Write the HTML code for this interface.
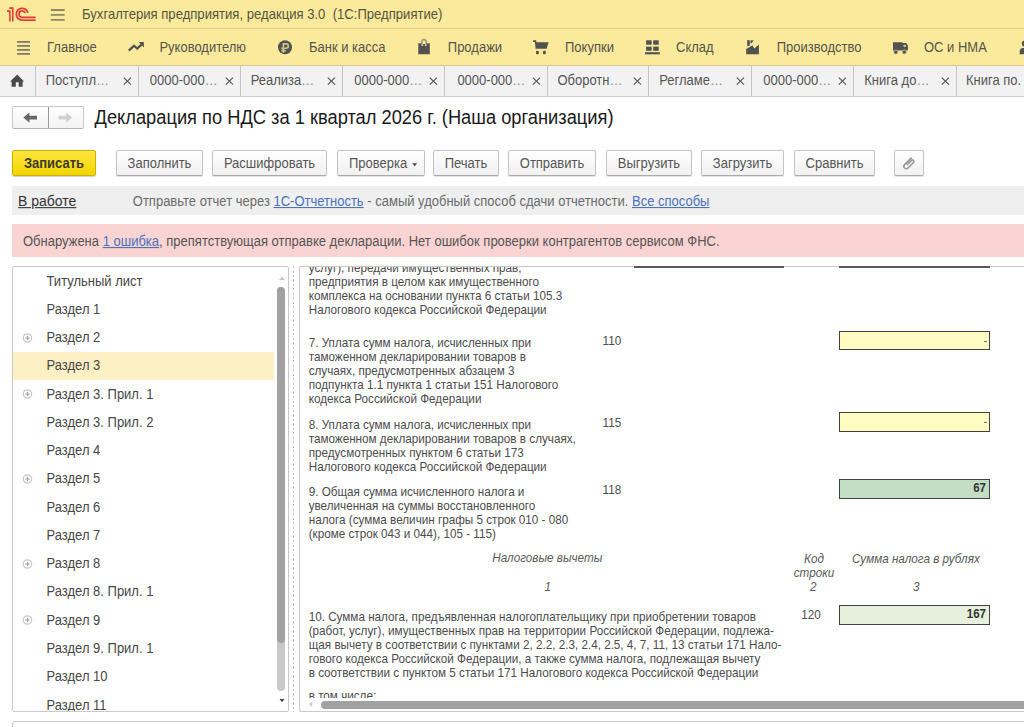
<!DOCTYPE html>
<html><head><meta charset="utf-8">
<style>
*{box-sizing:border-box}
html,body{margin:0;padding:0;width:1024px;height:727px;overflow:hidden;background:#fff;font-family:"Liberation Sans",sans-serif}
.a{position:absolute}
.t{position:absolute;white-space:nowrap;line-height:16px;transform:scaleY(1.1);transform-origin:0 3px}
.btn span{display:inline-block;transform:scaleY(1.1);transform-origin:0 9px}
#title{left:0;top:0;width:1024px;height:29px;background:#FBEA9B;border-bottom:1px solid #DCD08C}
#sect{left:0;top:29px;width:1024px;height:37px;background:#FBEA9B;border-bottom:1px solid #D6CB8A}
#tabs{left:0;top:66px;width:1024px;height:31px;background:#F2F2F2;border-bottom:1px solid #C9C9C9}
.sl{font-size:13px;color:#56544B}
.sep{position:absolute;top:66px;width:1px;height:30px;background:#C4C4C4}
.tabt{font-size:13px;color:#555}
.btn{position:absolute;top:150px;height:26px;border:1px solid #C4C4C4;border-bottom-color:#ABABAB;border-radius:2px;background:linear-gradient(#FFFFFF,#F1F1F1);box-shadow:0 1px 0 rgba(0,0,0,.10);font-size:13px;color:#555;text-align:center;line-height:24px;white-space:nowrap}
.tr{font-size:13px;color:#474747}
.doc{position:absolute;white-space:nowrap;font-size:11.7px;color:#4C4C4C;line-height:14px;transform:scaleY(1.1);transform-origin:0 2.6px}
.it{font-style:italic;color:#595959}
.fld{position:absolute;left:839px;width:151px;border:1px solid #404040}
.plus{position:absolute;width:9px;height:9px;border:1px solid #B5B5B5;border-radius:50%}
.plus:before{content:"";position:absolute;left:1.5px;top:3.5px;width:4px;height:1px;background:#A0A0A0}
.plus:after{content:"";position:absolute;left:3.5px;top:1.5px;width:1px;height:4px;background:#A0A0A0}
</style></head><body>

<div id="title" class="a"></div>
<svg class="a" style="left:4px;top:4px" width="36" height="22" viewBox="4 4 36 22"><path d="M28.0 12.9 A6 6 0 1 0 22.2 20.2 H35.6 V17.2 H22.2 A3.1 3.1 0 1 1 25.1 13.0 Z" fill="#EFA47E" opacity="0.75"/><g fill="none" stroke="#E13A33" stroke-width="1.55"><path d="M7 11.1 H9.9 V21.4"/><path d="M9.3 8.1 H12.8 V21.4"/><path d="M28.0 12.9 A6 6 0 1 0 22.2 20.2 H35.6"/><path d="M25.1 13.0 A3.1 3.1 0 1 0 22.2 17.2 H35.6"/></g></svg>
<svg class="a" style="left:48px;top:6px" width="20" height="18" viewBox="48 6 20 18"><g stroke="#8E8963" stroke-width="1.8"><path d="M50.8 10H64.7M50.8 14.8H64.7M50.8 19.8H64.7"/></g></svg>
<div class="t" style="left:82px;top:6px;font-size:13.1px;color:#57543F">Бухгалтерия предприятия, редакция 3.0&nbsp; (1С:Предприятие)</div>
<div id="sect" class="a"></div>
<svg class="a" style="left:14px;top:38px" width="20" height="20" viewBox="14 38 20 20"><g stroke="#7D7A62" stroke-width="1.8"><path d="M17.1 41.9H30M17.1 45.8H30M17.1 49.8H30M17.1 53.9H30"/></g></svg>
<svg class="a" style="left:124px;top:38px" width="24" height="16" viewBox="124 38 24 16"><path d="M128.8 50.6 L134 45.7 L137.2 48.5 L141.5 44.6" fill="none" stroke="#525250" stroke-width="2.3"/><path d="M138.8 42 H143.8 V47.4 Z" fill="#525250"/></svg>
<svg class="a" style="left:276px;top:38px" width="18" height="18" viewBox="276 38 18 18"><circle cx="285" cy="47.3" r="7" fill="#525250"/><path d="M283.4 52.8 V43.9 H286.1 A2.2 2.2 0 0 1 286.1 48.3 H281.3 M281.3 50.6 H285.8" fill="none" stroke="#CFC68C" stroke-width="1.6"/></svg>
<svg class="a" style="left:416px;top:37px" width="16" height="19" viewBox="416 37 16 19"><path d="M421.8 45.6 V41.7 A2.2 2.2 0 0 1 426.2 41.7 V45.6" fill="none" stroke="#9B956F" stroke-width="1.6"/><path d="M418.3 43.2 H420.9 L421.3 46 H423.1 V44.1 H424.9 V46 H426.7 L427.1 43.2 H429.8 V54.2 H418.3 Z" fill="#525250"/></svg>
<svg class="a" style="left:531px;top:39px" width="20" height="17" viewBox="531 39 20 17"><path d="M533.1 41.1 H535.4 L536 44" fill="none" stroke="#525250" stroke-width="1.6"/><path d="M535 42.3 H548.6 L546.6 48.8 H535.6 Z" fill="#525250"/><rect x="536" y="50.8" width="2.8" height="3.4" rx="1" fill="#525250"/><rect x="543" y="50.8" width="2.8" height="3.4" rx="1" fill="#525250"/></svg>
<svg class="a" style="left:643px;top:38px" width="19" height="18" viewBox="643 38 19 18"><g fill="#525250"><rect x="646.1" y="40.3" width="5.6" height="4.4"/><rect x="653.2" y="40.3" width="5.5" height="4.4"/><rect x="646.1" y="46.6" width="5.6" height="4.2"/><rect x="653.2" y="46.6" width="5.5" height="4.2"/><rect x="645" y="52.2" width="14.8" height="2.1"/></g></svg>
<svg class="a" style="left:744px;top:38px" width="17" height="18" viewBox="744 38 17 18"><path d="M746.2 54.3 V48.9 L752.5 45.3 L754.3 48.4 L758.9 44.4 V54.3 Z" fill="#525250"/><path d="M747.1 40.2 H749.8 V45.6 L747.3 46.6 Z" fill="#525250"/><path d="M750.5 40.2 H753.6 L751.6 43.2 H750.5 Z" fill="#525250"/></svg>
<svg class="a" style="left:890px;top:39px" width="20" height="16" viewBox="890 39 20 16"><path d="M893 42.3 H902.5 V43.1 H906.3 L907.9 45.5 V50.5 H893 Z" fill="#525250"/><rect x="903.4" y="44.8" width="2.7" height="2.2" rx="0.8" fill="#CFC68B"/><circle cx="895.8" cy="52" r="2.4" fill="#B5AE7C"/><circle cx="904.3" cy="52" r="2.4" fill="#B5AE7C"/><circle cx="895.8" cy="52" r="1.5" fill="#525250"/><circle cx="904.3" cy="52" r="1.5" fill="#525250"/></svg>
<svg class="a" style="left:1016px;top:38px" width="8" height="18" viewBox="1016 38 8 18"><circle cx="1025" cy="43.5" r="3.2" fill="#525250"/><path d="M1019.7 54.2 V51.5 A3.5 3.5 0 0 1 1023.2 48.1 H1030 V54.2 Z" fill="#525250"/></svg>
<div class="t sl" style="left:47px;top:39px">Главное</div>
<div class="t sl" style="left:159.4px;top:39px">Руководителю</div>
<div class="t sl" style="left:309px;top:39px">Банк и касса</div>
<div class="t sl" style="left:447.8px;top:39px">Продажи</div>
<div class="t sl" style="left:565px;top:39px">Покупки</div>
<div class="t sl" style="left:676px;top:39px">Склад</div>
<div class="t sl" style="left:776.7px;top:39px">Производство</div>
<div class="t sl" style="left:924px;top:39px">ОС и НМА</div>
<div id="tabs" class="a"></div>
<svg class="a" style="left:8px;top:72px" width="18" height="17" viewBox="8 72 18 17"><path d="M17.2 74.6 L24.1 81.6 H22.6 V86.8 H18.7 V82.2 H15.8 V86.8 H11.6 V81.6 H10.1 Z" fill="#4A4A4A"/></svg>
<div class="sep" style="left:35px"></div>
<div class="t tabt" style="left:45.7px;top:72px">Поступл<span style="color:#8C8C8C">…</span></div>
<svg class="a" style="left:122px;top:76px" width="12" height="11" viewBox="122 76 12 11"><path d="M123.8 77.6 L131.0 84.6 M131.0 77.6 L123.8 84.6" stroke="#5A5A5A" stroke-width="1.25"/></svg>
<div class="sep" style="left:138px"></div>
<div class="t tabt" style="left:149.8px;top:72px">0000-000<span style="color:#8C8C8C">…</span></div>
<svg class="a" style="left:224px;top:76px" width="12" height="11" viewBox="224 76 12 11"><path d="M225.8 77.6 L233.0 84.6 M233.0 77.6 L225.8 84.6" stroke="#5A5A5A" stroke-width="1.25"/></svg>
<div class="sep" style="left:240px"></div>
<div class="t tabt" style="left:250.7px;top:72px">Реализа<span style="color:#8C8C8C">…</span></div>
<svg class="a" style="left:326px;top:76px" width="12" height="11" viewBox="326 76 12 11"><path d="M327.8 77.6 L335.0 84.6 M335.0 77.6 L327.8 84.6" stroke="#5A5A5A" stroke-width="1.25"/></svg>
<div class="sep" style="left:342px"></div>
<div class="t tabt" style="left:354.3px;top:72px">0000-000<span style="color:#8C8C8C">…</span></div>
<svg class="a" style="left:428px;top:76px" width="12" height="11" viewBox="428 76 12 11"><path d="M429.8 77.6 L437.0 84.6 M437.0 77.6 L429.8 84.6" stroke="#5A5A5A" stroke-width="1.25"/></svg>
<div class="sep" style="left:444px"></div>
<div class="t tabt" style="left:457.4px;top:72px">0000-000<span style="color:#8C8C8C">…</span></div>
<svg class="a" style="left:530px;top:76px" width="12" height="11" viewBox="530 76 12 11"><path d="M532.8 77.6 L540.0 84.6 M540.0 77.6 L532.8 84.6" stroke="#5A5A5A" stroke-width="1.25"/></svg>
<div class="sep" style="left:547px"></div>
<div class="t tabt" style="left:557.4px;top:72px">Оборотн<span style="color:#8C8C8C">…</span></div>
<svg class="a" style="left:632px;top:76px" width="12" height="11" viewBox="632 76 12 11"><path d="M633.8 77.6 L641.0 84.6 M641.0 77.6 L633.8 84.6" stroke="#5A5A5A" stroke-width="1.25"/></svg>
<div class="sep" style="left:648px"></div>
<div class="t tabt" style="left:659.2px;top:72px">Регламе<span style="color:#8C8C8C">…</span></div>
<svg class="a" style="left:734px;top:76px" width="12" height="11" viewBox="734 76 12 11"><path d="M736.8 77.6 L744.0 84.6 M744.0 77.6 L736.8 84.6" stroke="#5A5A5A" stroke-width="1.25"/></svg>
<div class="sep" style="left:751px"></div>
<div class="t tabt" style="left:763.3px;top:72px">0000-000<span style="color:#8C8C8C">…</span></div>
<svg class="a" style="left:836px;top:76px" width="12" height="11" viewBox="836 76 12 11"><path d="M838.8 77.6 L846.0 84.6 M846.0 77.6 L838.8 84.6" stroke="#5A5A5A" stroke-width="1.25"/></svg>
<div class="sep" style="left:853px"></div>
<div class="t tabt" style="left:864.3px;top:72px">Книга до<span style="color:#8C8C8C">…</span></div>
<svg class="a" style="left:940px;top:76px" width="12" height="11" viewBox="940 76 12 11"><path d="M941.8 77.6 L949.0 84.6 M949.0 77.6 L941.8 84.6" stroke="#5A5A5A" stroke-width="1.25"/></svg>
<div class="sep" style="left:956px"></div>
<div class="t tabt" style="left:966.0px;top:72px">Книга по.</div>
<div class="a" style="left:12px;top:106px;width:72px;height:23px;border:1px solid #C8C8C8;border-bottom-color:#B4B4B4;border-radius:2px;background:linear-gradient(#FFFFFF,#F3F3F3)"></div>
<div class="a" style="left:48px;top:107px;width:1px;height:21px;background:#9A9A9A"></div>
<svg class="a" style="left:20px;top:110px" width="20" height="15" viewBox="20 110 20 15"><path d="M23.4 117.6 L29.4 112.4 V115.8 H37 V119.4 H29.4 V122.8 Z" fill="#676767"/></svg>
<svg class="a" style="left:56px;top:110px" width="20" height="15" viewBox="56 110 20 15"><path d="M72.2 117.6 L66.2 112.4 V115.8 H58.6 V119.4 H66.2 V122.8 Z" fill="#D0D0D0"/></svg>
<div class="t" style="left:94.5px;top:107px;font-size:18.3px;line-height:20px;color:#1A1A1A">Декларация по НДС за 1 квартал 2026 г. (Наша организация)</div>

<div class="a" style="left:12px;top:150px;width:84px;height:26px;border:1px solid #C9B200;border-radius:2px;background:linear-gradient(#FFE63F,#F4D600);box-shadow:0 1px 1px rgba(0,0,0,.18);font-size:13px;font-weight:bold;color:#3D3A2A;text-align:center;line-height:24px"><span style="display:inline-block;transform:scaleY(1.1);transform-origin:0 9px">Записать</span></div>
<div class="btn" style="left:116px;width:87px"><span>Заполнить</span></div>
<div class="btn" style="left:212px;width:115px"><span>Расшифровать</span></div>
<div class="btn" style="left:337px;width:88px;text-align:left;padding-left:11px"><span>Проверка</span></div>
<svg class="a" style="left:411px;top:162px" width="8" height="6" viewBox="411 162 8 6"><path d="M412.2 163.3 H417.2 L414.7 166.2 Z" fill="#4A4A4A"/></svg>
<div class="btn" style="left:433px;width:66px"><span>Печать</span></div>
<div class="btn" style="left:508px;width:88px"><span>Отправить</span></div>
<div class="btn" style="left:606px;width:86px"><span>Выгрузить</span></div>
<div class="btn" style="left:701px;width:83px"><span>Загрузить</span></div>
<div class="btn" style="left:794px;width:81px"><span>Сравнить</span></div>
<div class="btn" style="left:894px;width:30px"></div>
<svg class="a" style="left:901px;top:156px" width="15" height="15" viewBox="0 0 15 15"><path d="M10.6 1.6 L3.6 8.6 A2.4 2.4 0 0 0 7 12 L12.6 6.4 A1.5 1.5 0 0 0 10.5 4.3 L5.9 8.9" fill="none" stroke="#9C9C9C" stroke-width="1.7"/></svg>
<div class="a" style="left:12px;top:186px;width:1012px;height:29px;background:#EFEFEF"></div>
<div class="t" style="left:18px;top:192px;font-size:14px;color:#333;text-decoration:underline">В работе</div>
<div class="t" style="left:132.8px;top:192.5px;font-size:13px;color:#6B6B6B;text-underline-offset:1px">Отправьте отчет через <span style="color:#4B72BA;text-decoration:underline">1С-Отчетность</span> - самый удобный способ сдачи отчетности. <span style="color:#4B72BA;text-decoration:underline">Все способы</span></div>
<div class="a" style="left:12px;top:224px;width:1012px;height:33px;background:#FAD4D3"></div>
<div class="t" style="left:23px;top:232.5px;font-size:13px;color:#555">Обнаружена <span style="color:#4B72BA;text-decoration:underline">1 ошибка</span>, препятствующая отправке декларации. Нет ошибок проверки контрагентов сервисом ФНС.</div>

<div class="a" style="left:12px;top:266px;width:277px;height:446px;border:1px solid #C9C9C9;border-radius:2px;overflow:hidden">
<div class="t tr" style="left:33.5px;top:5.50px">Титульный лист</div>
<div class="t tr" style="left:33.5px;top:33.77px">Раздел 1</div>
<svg class="a" style="left:9px;top:64.64px" width="13" height="12" viewBox="9 64.64 13 12"><circle cx="14.5" cy="70.64" r="4.2" fill="none" stroke="#C8C8C8" stroke-width="1.2"/><path d="M12.2 70.64 H16.8 M14.5 68.34 V72.94" stroke="#A0A0A0" stroke-width="1.2"/></svg>
<div class="t tr" style="left:33.5px;top:62.04px">Раздел 2</div>
<div class="a" style="left:0;top:85.01px;width:261px;height:28.27px;background:#FDF0C4"></div>
<div class="t tr" style="left:33.5px;top:90.31px">Раздел 3</div>
<svg class="a" style="left:9px;top:121.18px" width="13" height="12" viewBox="9 121.18 13 12"><circle cx="14.5" cy="127.18" r="4.2" fill="none" stroke="#C8C8C8" stroke-width="1.2"/><path d="M12.2 127.18 H16.8 M14.5 124.88 V129.48" stroke="#A0A0A0" stroke-width="1.2"/></svg>
<div class="t tr" style="left:33.5px;top:118.58px">Раздел 3. Прил. 1</div>
<div class="t tr" style="left:33.5px;top:146.85px">Раздел 3. Прил. 2</div>
<div class="t tr" style="left:33.5px;top:175.12px">Раздел 4</div>
<svg class="a" style="left:9px;top:205.99px" width="13" height="12" viewBox="9 205.99 13 12"><circle cx="14.5" cy="211.99" r="4.2" fill="none" stroke="#C8C8C8" stroke-width="1.2"/><path d="M12.2 211.99 H16.8 M14.5 209.69 V214.29" stroke="#A0A0A0" stroke-width="1.2"/></svg>
<div class="t tr" style="left:33.5px;top:203.39px">Раздел 5</div>
<div class="t tr" style="left:33.5px;top:231.66px">Раздел 6</div>
<div class="t tr" style="left:33.5px;top:259.93px">Раздел 7</div>
<svg class="a" style="left:9px;top:290.80px" width="13" height="12" viewBox="9 290.80 13 12"><circle cx="14.5" cy="296.80" r="4.2" fill="none" stroke="#C8C8C8" stroke-width="1.2"/><path d="M12.2 296.80 H16.8 M14.5 294.50 V299.10" stroke="#A0A0A0" stroke-width="1.2"/></svg>
<div class="t tr" style="left:33.5px;top:288.20px">Раздел 8</div>
<div class="t tr" style="left:33.5px;top:316.47px">Раздел 8. Прил. 1</div>
<svg class="a" style="left:9px;top:347.34px" width="13" height="12" viewBox="9 347.34 13 12"><circle cx="14.5" cy="353.34" r="4.2" fill="none" stroke="#C8C8C8" stroke-width="1.2"/><path d="M12.2 353.34 H16.8 M14.5 351.04 V355.64" stroke="#A0A0A0" stroke-width="1.2"/></svg>
<div class="t tr" style="left:33.5px;top:344.74px">Раздел 9</div>
<div class="t tr" style="left:33.5px;top:373.01px">Раздел 9. Прил. 1</div>
<div class="t tr" style="left:33.5px;top:401.28px">Раздел 10</div>
<div class="t tr" style="left:33.5px;top:429.55px">Раздел 11</div>
<div class="a" style="left:264px;top:20px;width:8px;height:404px;border-radius:4px;background:#C9C9C9"></div>
<div class="a" style="left:264px;top:20px;width:8px;height:356px;border-radius:4px;background:#A2A2A2"></div>
<svg class="a" style="left:266px;top:9px" width="6" height="4" viewBox="0 0 6 4"><path d="M0 4 H6 L3 0.5 Z" fill="#C8C8C8"/></svg>
<svg class="a" style="left:266px;top:431.5px" width="6" height="4" viewBox="0 0 6 4"><path d="M0.5 0 H5.5 L3 3.3 Z" fill="#444"/></svg>
</div>
<div class="a" style="left:293px;top:266px;width:1px;height:446px;background:repeating-linear-gradient(#C2C2C2 0 2px,transparent 2px 4.5px)"></div>
<div class="a" style="left:299px;top:266px;width:730px;height:446px;border:1px solid #C9C9C9;border-right:none;border-radius:2px 0 0 2px"></div>
<div class="a" style="left:300px;top:267px;width:724px;height:430.5px;overflow:hidden">
<div class="doc" style="left:8.7px;top:-7.0px">услуг), передачи имущественных прав,</div>
<div class="doc" style="left:8.7px;top:7.0px">предприятия в целом как имущественного</div>
<div class="doc" style="left:8.7px;top:21.0px">комплекса на основании пункта 6 статьи 105.3</div>
<div class="doc" style="left:8.7px;top:35.0px">Налогового кодекса Российской Федерации</div>
<div class="doc" style="left:8.7px;top:68.3px">7. Уплата сумм налога, исчисленных при</div>
<div class="doc" style="left:8.7px;top:82.3px">таможенном декларировании товаров в</div>
<div class="doc" style="left:8.7px;top:96.3px">случаях, предусмотренных абзацем 3</div>
<div class="doc" style="left:8.7px;top:110.3px">подпункта 1.1 пункта 1 статьи 151 Налогового</div>
<div class="doc" style="left:8.7px;top:124.3px">кодекса Российской Федерации</div>
<div class="doc" style="left:8.7px;top:150.0px">8. Уплата сумм налога, исчисленных при</div>
<div class="doc" style="left:8.7px;top:164.0px">таможенном декларировании товаров в случаях,</div>
<div class="doc" style="left:8.7px;top:178.0px">предусмотренных пунктом 6 статьи 173</div>
<div class="doc" style="left:8.7px;top:192.0px">Налогового кодекса Российской Федерации</div>
<div class="doc" style="left:8.7px;top:216.6px">9. Общая сумма исчисленного налога и</div>
<div class="doc" style="left:8.7px;top:230.6px">увеличенная на суммы восстановленного</div>
<div class="doc" style="left:8.7px;top:244.6px">налога (сумма величин графы 5 строк 010 - 080</div>
<div class="doc" style="left:8.7px;top:258.6px">(кроме строк 043 и 044), 105 - 115)</div>
<div class="doc" style="left:302.5px;top:66.3px">110</div>
<div class="doc" style="left:302.5px;top:148.2px">115</div>
<div class="doc" style="left:302.5px;top:214.8px">118</div>
<div class="doc it" style="left:192.3px;top:283.0px">Налоговые вычеты</div>
<div class="doc it" style="left:244.5px;top:312.0px">1</div>
<div class="doc it" style="left:504.0px;top:284.4px">Код</div>
<div class="doc it" style="left:493.7px;top:297.8px">строки</div>
<div class="doc it" style="left:510.0px;top:312.0px">2</div>
<div class="doc it" style="left:552.0px;top:284.4px">Сумма налога в рублях</div>
<div class="doc it" style="left:613.0px;top:312.0px">3</div>
<div class="doc" style="left:8.7px;top:342.4px">10. Сумма налога, предъявленная налогоплательщику при приобретении товаров</div>
<div class="doc" style="left:8.7px;top:356.4px">(работ, услуг), имущественных прав на территории Российской Федерации, подлежа-</div>
<div class="doc" style="left:8.7px;top:370.4px">щая вычету в соответствии с пунктами 2, 2.2, 2.3, 2.4, 2.5, 4, 7, 11, 13 статьи 171 Нало-</div>
<div class="doc" style="left:8.7px;top:384.4px">гового кодекса Российской Федерации, а также сумма налога, подлежащая вычету</div>
<div class="doc" style="left:8.7px;top:398.4px">в соответствии с пунктом 5 статьи 171 Налогового кодекса Российской Федерации</div>
<div class="doc" style="left:501.3px;top:340.2px">120</div>
<div class="doc" style="left:8.7px;top:421.0px">в том числе:</div>
</div>
<div class="a" style="left:634px;top:266px;width:150px;height:2px;background:#5A5A5A"></div>
<div class="a" style="left:839px;top:266px;width:151px;height:2px;background:#5A5A5A"></div>
<div class="fld" style="top:330.5px;height:19.5px;background:#FFFCC1"></div>
<div class="a" style="left:984px;top:341px;width:3px;height:1px;background:#707070"></div>
<div class="fld" style="top:412px;height:20px;background:#FFFCC1"></div>
<div class="a" style="left:984px;top:422px;width:3px;height:1px;background:#707070"></div>
<div class="fld" style="top:478.5px;height:20.5px;background:#C3DFC3"></div>
<div class="t" style="left:939px;top:480.2px;width:47px;text-align:right;font-size:11.5px;font-weight:bold;color:#333;line-height:14px">67</div>
<div class="fld" style="top:605px;height:19.5px;background:#E6F0DC"></div>
<div class="t" style="left:939px;top:606px;width:47px;text-align:right;font-size:11.5px;font-weight:bold;color:#333;line-height:14px">167</div>
<svg class="a" style="left:307px;top:700px" width="7" height="9" viewBox="307 700 7 9"><path d="M312.2 701.6 V706.8 L308.6 704.2 Z" fill="#CACACA"/></svg>
<div class="a" style="left:320.5px;top:700.5px;width:720px;height:8px;border-radius:4px;background:#A2A2A2"></div>
<div class="a" style="left:12px;top:721px;width:1020px;height:20px;border:1px solid #C8C8C8;border-radius:3px"></div>
</body></html>
